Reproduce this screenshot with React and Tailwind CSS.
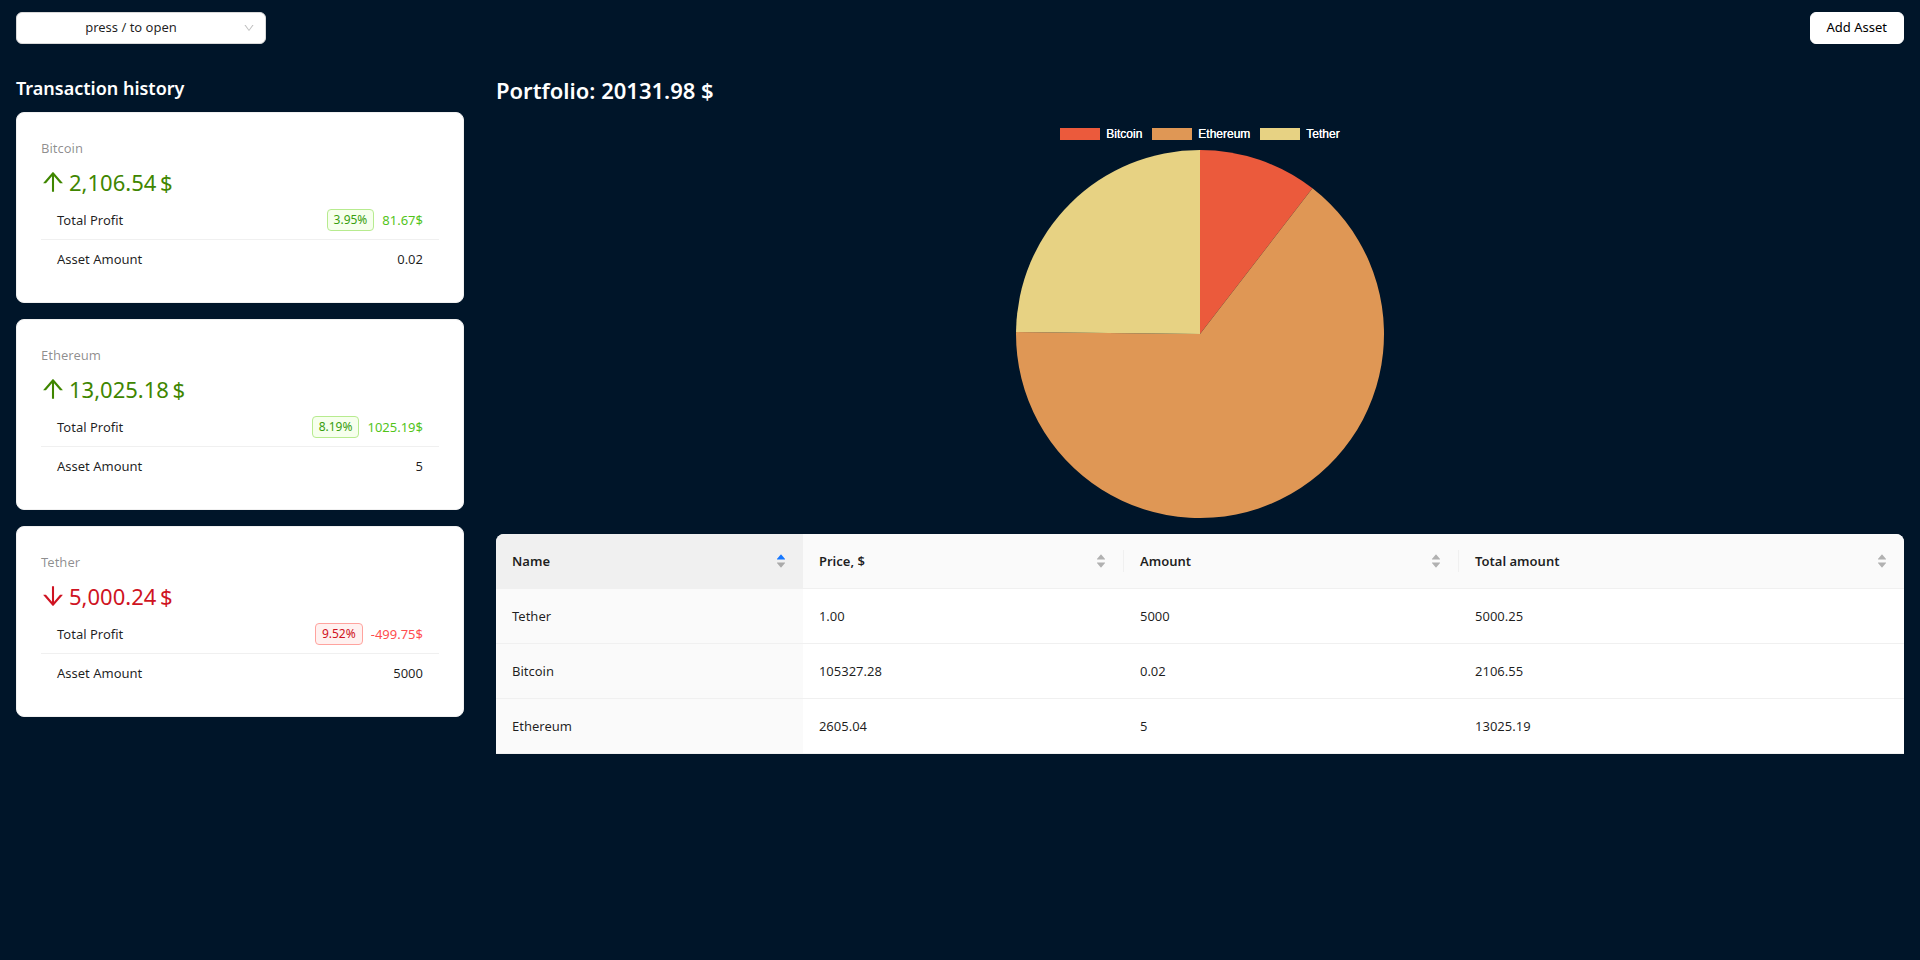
import {
  AiFillCaretDown,
  AiFillCaretUp,
  AiOutlineArrowDown,
  AiOutlineArrowUp,
  AiOutlineDown,
} from "react-icons/ai";

const assets = [
  { name: "Bitcoin", total: "2,106.54", percent: "3.95%", profit: "81.67$", amount: "0.02", grow: true },
  { name: "Ethereum", total: "13,025.18", percent: "8.19%", profit: "1025.19$", amount: "5", grow: true },
  { name: "Tether", total: "5,000.24", percent: "9.52%", profit: "-499.75$", amount: "5000", grow: false },
];

const slices = [
  { name: "Bitcoin", value: 2106.54, fill: "fill-[#eb5a3c]", swatch: "bg-[#eb5a3c]" },
  { name: "Ethereum", value: 13025.19, fill: "fill-[#df9755]", swatch: "bg-[#df9755]" },
  { name: "Tether", value: 5000.25, fill: "fill-[#e7d283]", swatch: "bg-[#e7d283]" },
];

const columns = [
  { title: "Name", width: "w-[21.8%]", sorted: true },
  { title: "Price, $", width: "w-[22.8%]", divider: true },
  { title: "Amount", width: "w-[23.8%]", divider: true },
  { title: "Total amount", width: "" },
];

const rows = [
  ["Tether", "1.00", "5000", "5000.25"],
  ["Bitcoin", "105327.28", "0.02", "2106.55"],
  ["Ethereum", "2605.04", "5", "13025.19"],
];

function Header() {
  return (
    <header className="flex items-center justify-between px-4 py-3">
      <div className="relative">
        <select
          aria-label="Select coin"
          className="block h-8 w-[250px] appearance-none rounded-md border border-[#d9d9d9] bg-white pr-7 pl-2 text-center text-[13px] text-black/88"
        >
          <option>press / to open</option>
        </select>
        <AiOutlineDown className="pointer-events-none absolute top-2.5 right-[11px] size-3 text-black/25" />
      </div>
      <button className="h-8 rounded-md border border-white bg-white px-4 text-[13px] text-black">Add Asset</button>
    </header>
  );
}

function AssetCard({ asset }) {
  const Arrow = asset.grow ? AiOutlineArrowUp : AiOutlineArrowDown;
  return (
    <article className="rounded-lg border border-[#f0f0f0] bg-white p-6 text-[13px] leading-[22px] text-black/88">
      <h3 className="mb-1 text-black/45">{asset.name}</h3>
      <p
        className={`flex h-[38px] items-center gap-0.5 text-[22px] ${asset.grow ? "text-[#3f8600]" : "text-[#cf1322]"}`}
      >
        <Arrow className="-ml-0.5 size-7" />
        <span>{asset.total}&thinsp;$</span>
      </p>
      <dl>
        <div className="flex items-center justify-between border-b border-[#f0f0f0] px-4 py-2">
          <dt>Total Profit</dt>
          <dd className="flex items-center gap-2">
            <span
              className={`rounded-sm border px-1.5 text-xs leading-5 ${
                asset.grow
                  ? "border-[#b7eb8f] bg-[#f6ffed] text-[#389e0d]"
                  : "border-[#ffa39e] bg-[#fff1f0] text-[#cf1322]"
              }`}
            >
              {asset.percent}
            </span>
            <span className={asset.grow ? "text-[#52c41a]" : "text-[#ff4d4f]"}>{asset.profit}</span>
          </dd>
        </div>
        <div className="flex items-center justify-between px-4 py-2">
          <dt>Asset Amount</dt>
          <dd>{asset.amount}</dd>
        </div>
      </dl>
    </article>
  );
}

function PieChart() {
  const sum = slices.reduce((acc, s) => acc + s.value, 0);
  const radius = 184;
  const point = (share) => {
    const angle = share * 2 * Math.PI;
    return `${radius + radius * Math.sin(angle)} ${radius - radius * Math.cos(angle)}`;
  };
  let start = 0;
  const paths = slices.map((s) => {
    const end = start + s.value / sum;
    const large = end - start > 0.5 ? 1 : 0;
    const d = `M${radius} ${radius}L${point(start)}A${radius} ${radius} 0 ${large} 1 ${point(end)}Z`;
    start = end;
    return <path key={s.name} d={d} className={s.fill} />;
  });
  return (
    <figure className="flex flex-col items-center gap-2.5">
      <figcaption className="flex gap-2.5 font-['Liberation_Sans',sans-serif] text-xs leading-3 text-white">
        {slices.map((s) => (
          <span key={s.name} className="flex gap-1.5">
            <span className={`h-3 w-10 ${s.swatch}`} />
            <span className="[text-shadow:0_0_0_white]">{s.name}</span>
          </span>
        ))}
      </figcaption>
      <svg viewBox="0 0 368 368" className="size-[368px]" role="img" aria-label="Portfolio shares">
        {paths}
      </svg>
    </figure>
  );
}

function AssetsTable() {
  return (
    <table className="w-full table-fixed border-separate border-spacing-0 overflow-hidden rounded-t-lg bg-white text-left text-[13px] leading-[22px] text-black/88">
      <thead>
        <tr>
          {columns.map((c) => (
            <th
              key={c.title}
              className={`border-b border-[#f0f0f0] py-4 font-semibold ${c.width} ${c.sorted ? "bg-[#f0f0f0]" : "bg-[#fafafa]"}`}
            >
              <button
                className={`flex h-[22px] w-full items-center justify-between px-4 text-left ${c.divider ? "border-r border-[#f0f0f0]" : ""}`}
              >
                {c.title}
                <span className="flex flex-col text-black/29">
                  <AiFillCaretUp className={`size-3 ${c.sorted ? "text-[#1677ff]" : ""}`} />
                  <AiFillCaretDown className="-mt-1 size-3" />
                </span>
              </button>
            </th>
          ))}
        </tr>
      </thead>
      <tbody>
        {rows.map((row) => (
          <tr key={row[0]}>
            {row.map((cell, i) => (
              <td key={columns[i].title} className={`border-b border-[#f0f0f0] p-4 ${i === 0 ? "bg-[#fafafa]" : ""}`}>
                {cell}
              </td>
            ))}
          </tr>
        ))}
      </tbody>
    </table>
  );
}

export default function App() {
  return (
    <div className="min-h-screen bg-[#001529] font-['Noto_Sans',sans-serif]">
      <Header />
      <div className="flex pt-1">
        <aside className="w-1/4 shrink-0 p-4">
          <h2 className="mb-3 text-lg leading-6 font-semibold text-white">Transaction history</h2>
          <div className="flex flex-col gap-4">
            {assets.map((a) => (
              <AssetCard key={a.name} asset={a} />
            ))}
          </div>
        </aside>
        <main className="min-w-0 flex-1 p-4">
          <h1 className="mb-6 text-[22px] leading-7 font-semibold text-white">Portfolio: 20131.98 $</h1>
          <PieChart />
          <div className="mt-4">
            <AssetsTable />
          </div>
        </main>
      </div>
    </div>
  );
}
